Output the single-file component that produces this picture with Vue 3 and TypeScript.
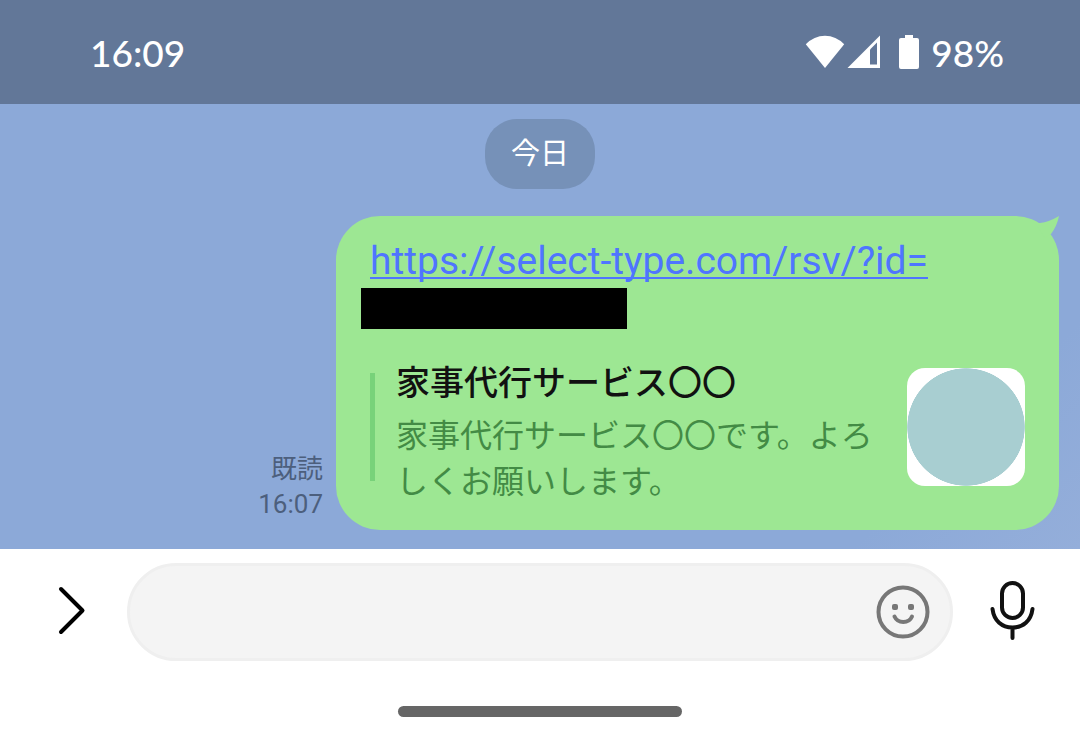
<script setup lang="ts">
import { ref } from 'vue'

interface LinkPreview {
  title: string
  description: string
}

const clock = '16:09'
const battery = '98%'
const draft = ref('')
const url = 'https://select-type.com/rsv/?id='
const preview: LinkPreview = {
  title: '家事代行サービス〇〇',
  description: '家事代行サービス〇〇です。よろしくお願いします。',
}
</script>

<template>
  <div class="screen">
    <header class="status">
      <time class="clock">{{ clock }}</time>
      <div class="indicators">
        <svg class="wifi" viewBox="0 0 40 34" aria-hidden="true">
          <path d="M20 33 .8 9.300Q9 .7 20 .7T39.200 9.300Z" fill="#fff" />
        </svg>
        <svg class="signal" viewBox="0 0 34 34" aria-hidden="true">
          <path d="M33 .5V33H.5Z" fill="#fff" />
          <path d="M23 14.500 30 7.500V29.500H23Z" fill="#627798" />
        </svg>
        <svg class="battery" viewBox="0 0 20 34" aria-hidden="true">
          <path d="M6 0h8v3h4q2 0 2 2v27q0 2-2 2H2q-2 0-2-2V5q0-2 2-2h4Z" fill="#fff" />
        </svg>
        <span class="level">{{ battery }}</span>
      </div>
    </header>

    <main class="chat">
      <div class="day">今日</div>
      <article class="message">
        <div class="meta">
          <span>既読</span>
          <time>16:07</time>
        </div>
        <div class="bubble">
          <svg class="tail" viewBox="0 0 24 22" aria-hidden="true">
            <path d="M0 7H5Q14 6 24 0Q22 10 16 18L10 22Z" fill="#9de793" />
          </svg>
          <a class="link" :href="url">{{ url }}</a>
          <div class="redacted"></div>
          <section class="preview">
            <div class="rule"></div>
            <div class="copy">
              <h2>{{ preview.title }}</h2>
              <p>{{ preview.description }}</p>
            </div>
            <div class="thumb"></div>
          </section>
        </div>
      </article>
    </main>

    <footer class="dock">
      <form class="composer" @submit.prevent>
        <button class="expand" type="button" aria-label="メニューを開く">
          <svg viewBox="0 0 30 50" width="30" height="50" fill="none" stroke="#000" stroke-width="4" stroke-linecap="round" stroke-linejoin="round">
            <path d="M4 4 25.500 25.500 4 47" />
          </svg>
        </button>
        <div class="field">
          <input v-model="draft" type="text" aria-label="メッセージを入力" />
          <button class="emoji" type="button" aria-label="スタンプ">
            <svg viewBox="0 0 54 54" width="54" height="54" fill="none" stroke="#777" stroke-width="4">
              <circle cx="27" cy="27" r="24.500" />
              <rect x="16" y="19" width="6" height="6" rx="2" fill="#777" stroke="none" />
              <rect x="32" y="19" width="6" height="6" rx="2" fill="#777" stroke="none" />
              <path d="M18.500 31.500Q21 37 27.300 37T36 31.500" stroke-linecap="round" />
            </svg>
          </button>
        </div>
        <button class="voice" type="button" aria-label="音声メッセージ">
          <svg viewBox="0 0 46 60" width="46" height="60" fill="none" stroke="#111" stroke-width="4" stroke-linecap="round">
            <rect x="12" y="3" width="21" height="35" rx="10.500" />
            <path d="M2.500 29C4 41 12 47.500 22.500 47.500S41 41 42.500 29M22.500 48V58" />
          </svg>
        </button>
      </form>
      <div class="home"></div>
    </footer>
  </div>
</template>

<style>
body {
  margin: 0;
  background: #fff;
}
</style>

<style scoped>
.screen {
  display: flex;
  flex-direction: column;
  min-height: 100vh;
  background: #fff;
  font-family: Roboto, "Noto Sans CJK JP", sans-serif;
}

.status {
  display: flex;
  align-items: center;
  justify-content: space-between;
  height: 104px;
  padding: 0 76px 0 90px;
  box-sizing: border-box;
  background: #627798;
  color: #fff;
  font-family: "Lato Medium", Lato, sans-serif;
  font-size: 37px;
  font-weight: 500;
}

.indicators {
  display: flex;
  align-items: center;
}

.wifi {
  width: 40px;
  height: 34px;
}

.signal {
  width: 34px;
  height: 34px;
  margin-left: 2px;
}

.battery {
  width: 20px;
  height: 34px;
  margin: 0 12px 0 18px;
}

.chat {
  padding: 15px 0 19px;
  background: linear-gradient(135deg, #8ca9d8 85%, #94aeda 100%);
}

.day {
  width: fit-content;
  margin: 0 auto 27px;
  padding: 0 26px;
  border-radius: 32px;
  background: #7691b8;
  color: #fff;
  font-size: 29px;
  line-height: 70px;
}

.message {
  display: flex;
  align-items: flex-end;
  justify-content: flex-end;
  gap: 13px;
  padding-right: 21px;
}

.meta {
  display: flex;
  flex: none;
  flex-direction: column;
  align-items: flex-end;
  padding-bottom: 8px;
  color: #4c5f7d;
  font-size: 26px;
  line-height: 35px;
}

.bubble {
  position: relative;
  flex: 0 1 723px;
  padding: 22px 34px 28px;
  box-sizing: border-box;
  border-radius: 44px;
  background: #9de793;
}

.tail {
  position: absolute;
  top: 0;
  right: 0;
  width: 24px;
  height: 22px;
}

.link {
  display: block;
  width: fit-content;
  color: #4f75ff;
  font-size: 39px;
  line-height: 46px;
  text-decoration-line: underline;
  text-decoration-thickness: 2px;
  text-decoration-skip-ink: none;
  text-underline-offset: 3px;
}

.redacted {
  width: 266px;
  height: 41px;
  margin: 4px 0 23px -9px;
  background: #000;
}

.preview {
  display: flex;
  align-items: center;
}

.rule {
  flex: none;
  align-self: stretch;
  width: 5px;
  margin: 21px 21px 21px 0;
  background: #78d27a;
}

.copy {
  flex: 1;
  min-width: 0;
  font-family: "Noto Sans CJK JP", sans-serif;
}

.copy h2 {
  margin: 0;
  color: #111;
  font-size: 34px;
  font-weight: 500;
  line-height: 58px;
}

.copy p {
  margin: 0;
  color: #438b45;
  font-size: 32px;
  line-height: 46px;
}

.thumb {
  flex: none;
  width: 118px;
  height: 118px;
  margin-left: 24px;
  border-radius: 18px;
  background: radial-gradient(circle closest-side, #a8ced1 99%, #fff 100%);
}

.dock {
  flex: 1;
  padding: 14px 0 21px;
  background: #fff;
}

.composer {
  display: flex;
  align-items: center;
  padding: 0 8px 0 16px;
}

button {
  display: flex;
  align-items: center;
  justify-content: center;
  padding: 0;
  border: 0;
  background: none;
}

.expand {
  flex: none;
  width: 111px;
  height: 94px;
  align-self: flex-start;
}

.voice {
  flex: none;
  width: 119px;
  height: 94px;
  align-self: flex-start;
}

.field {
  display: flex;
  flex: 1;
  align-items: center;
  height: 98px;
  padding: 0 20px 0 40px;
  box-sizing: border-box;
  border: 3px solid #efefef;
  border-radius: 49px;
  background: #f4f4f4;
}

.field input {
  flex: 1;
  min-width: 0;
  height: 60px;
  border: 0;
  outline: 0;
  background: transparent;
  color: #111;
  font: inherit;
  font-size: 34px;
}

.home {
  width: 284px;
  height: 11px;
  margin: 45px auto 0;
  border-radius: 6px;
  background: #666;
}
</style>
